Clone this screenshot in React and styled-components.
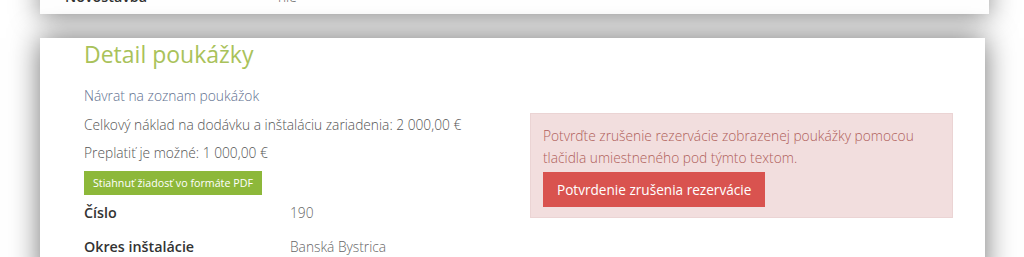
import React from "react";
import styled, { createGlobalStyle } from "styled-components";

const Global = createGlobalStyle`
  html, body { margin: 0; padding: 0; background: #fff; }
  body { font-family: "Open Sans", "Liberation Sans", sans-serif; overflow: hidden; }
`;

const Page = styled.div`
  display: flex;
  flex-direction: column;
  gap: 24px;
  padding-left: 40px;
  margin-top: -17px;
`;

const Card = styled.section`
  background: #fff;
  box-shadow: 0 0 28px rgba(0, 0, 0, 0.55);
  margin-right: ${(p) => p.$right}px;
  padding: ${(p) => p.$pad};
`;

const InfoRow = styled.div`
  display: grid;
  grid-template-columns: ${(p) => p.$label}px 1fr;
  align-items: center;
  height: ${(p) => p.$h}px;
`;

const Label = styled.div`
  font-weight: 600;
  font-size: 14.3px;
  color: #333;
`;

const Value = styled.div`
  font-weight: 300;
  font-size: 13.75px;
  color: #666;
`;

const Heading = styled.h1`
  margin: 0;
  font-weight: 400;
  font-size: 23px;
  line-height: 32px;
  color: #a9c25a;
`;

const Columns = styled.div`
  display: grid;
  grid-template-columns: 446px 423px;
  margin-top: 16px;
`;

const LeftCol = styled.div`
  display: flex;
  flex-direction: column;
`;

const LinkText = styled.a`
  font-size: 13.8px;
  font-weight: 300;
  line-height: 20px;
  color: #5f7190;
  text-decoration: none;
  margin-bottom: 9px;
`;

const Para = styled.p`
  margin: 0 0 8px;
  font-size: 13.75px;
  font-weight: 300;
  line-height: 20px;
  color: #555;
`;

const GreenButton = styled.button`
  align-self: flex-start;
  border: 0;
  background: #8db83a;
  color: #fff;
  font-family: inherit;
  font-size: 10.7px;
  height: 24px;
  padding: 0 9px;
  margin: 0;
  cursor: pointer;
`;

const Alert = styled.div`
  margin-top: 27px;
  align-self: start;
  background: #f2dede;
  border: 1px solid #ebd4d4;
  padding: 11px 12px 10px;
  color: #b0605a;
  font-size: 13.75px;
  font-weight: 300;
  line-height: 22px;
`;

const RedButton = styled.button`
  margin-top: 3px;
  border: 0;
  background: #d9534f;
  color: #fff;
  font-family: inherit;
  font-size: 13.6px;
  height: 35px;
  padding: 0 14px;
  cursor: pointer;
`;

export default function App() {
  return (
    <>
      <Global />
      <Page>
        <Card $right={35} $pad="0 0 5px 25px">
          <InfoRow $label={213} $h={26}>
            <Label>Novostavba</Label>
            <Value>nie</Value>
          </InfoRow>
        </Card>
        <Card $right={39} $pad="0 0 20px 44px">
          <Heading>Detail poukážky</Heading>
          <Columns>
            <LeftCol>
              <LinkText href="#">Návrat na zoznam poukážok</LinkText>
              <Para>Celkový náklad na dodávku a inštaláciu zariadenia: 2 000,00 €</Para>
              <Para>Preplatiť je možné: 1 000,00 €</Para>
              <GreenButton>Stiahnuť žiadosť vo formáte PDF</GreenButton>
              <InfoRow $label={206} $h={34}>
                <Label>Číslo</Label>
                <Value>190</Value>
              </InfoRow>
              <InfoRow $label={206} $h={34}>
                <Label>Okres inštalácie</Label>
                <Value>Banská Bystrica</Value>
              </InfoRow>
            </LeftCol>
            <Alert>
              Potvrďte zrušenie rezervácie zobrazenej poukážky pomocou tlačidla umiestneného pod týmto textom.
              <div>
                <RedButton>Potvrdenie zrušenia rezervácie</RedButton>
              </div>
            </Alert>
          </Columns>
        </Card>
      </Page>
    </>
  );
}
